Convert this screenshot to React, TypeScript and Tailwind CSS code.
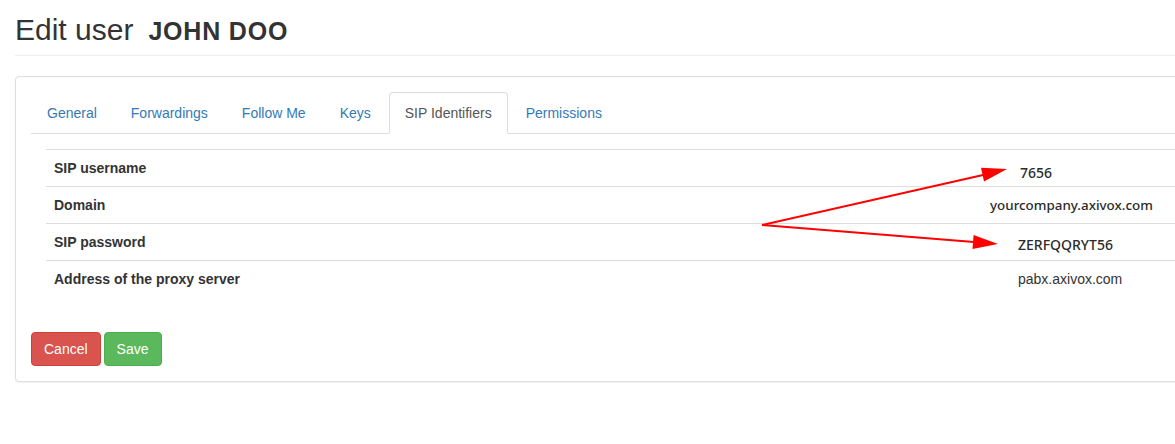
const tabs = ["General", "Forwardings", "Follow Me", "Keys", "SIP Identifiers", "Permissions"];

const App = () => {
    return (
        <div className="relative w-full h-[444px] overflow-hidden bg-white text-[14px] leading-5 text-[#333]" style={{ fontFamily: '"Liberation Sans", Arial, sans-serif' }}>
            <div className="w-[1220px] pl-[15px]">

                {/* HEADER */}
                <div className="pt-[13px] pb-[7px] border-b border-[#eee]">
                    <h1 className="text-[30px] leading-[33px] font-normal">
                        Edit user
                        <span className="ml-[15px] text-[25px] font-bold tracking-[0.8px]">JOHN DOO</span>
                    </h1>
                </div>

                {/* PANEL */}
                <div className="mt-5 border border-[#ddd] rounded shadow-[0_1px_1px_rgba(0,0,0,0.05)] p-[15px]">
                    <ul className="flex border-b border-[#ddd]">
                        {tabs.map((t) => (
                            <li key={t} className="mr-[2px] -mb-px">
                                <a
                                    className={`block px-[15px] py-[10px] rounded-t border ${
                                        t === "SIP Identifiers"
                                            ? "bg-white border-[#ddd] border-b-transparent text-[#555]"
                                            : "border-transparent text-[#337ab7]"
                                    }`}
                                >
                                    {t}
                                </a>
                            </li>
                        ))}
                    </ul>

                    <div className="p-[15px]">
                        <div className="mb-5">
                            <div className="grid grid-cols-[936px_1fr] border-t border-[#ddd]">
                                <div className="p-2 font-bold">SIP username</div>
                                <div className="p-2">
                                    <span className="inline-block ml-[30px] translate-y-[5px] font-medium text-[#2b2b2b]" style={{ fontFamily: '"Noto Sans", sans-serif' }}>7656</span>
                                </div>
                            </div>
                            <div className="grid grid-cols-[936px_1fr] border-t border-[#ddd]">
                                <div className="p-2 font-bold">Domain</div>
                                <div className="p-2">
                                    <span className="inline-block text-[13.4px] font-medium text-[#2b2b2b]" style={{ fontFamily: '"Noto Sans", sans-serif' }}>yourcompany.axivox.com</span>
                                </div>
                            </div>
                            <div className="grid grid-cols-[936px_1fr] border-t border-[#ddd]">
                                <div className="p-2 font-bold">SIP password</div>
                                <div className="p-2">
                                    <span className="inline-block ml-[28px] translate-y-[3px] font-medium text-[#2b2b2b]" style={{ fontFamily: '"Noto Sans", sans-serif' }}>ZERFQQRYT56</span>
                                </div>
                            </div>
                            <div className="grid grid-cols-[936px_1fr] border-t border-[#ddd]">
                                <div className="p-2 font-bold">Address of the proxy server</div>
                                <div className="p-2">
                                    <span className="ml-[28px]">pabx.axivox.com</span>
                                </div>
                            </div>
                        </div>
                    </div>

                    <div className="flex gap-[3px]">
                        <button className="px-3 py-[6px] rounded border border-[#d43f3a] bg-[#d9534f] text-white">Cancel</button>
                        <button className="px-3 py-[6px] rounded border border-[#4cae4c] bg-[#5cb85c] text-white">Save</button>
                    </div>
                </div>
            </div>

            {/* ANNOTATION ARROWS */}
            <svg className="absolute inset-0 pointer-events-none" width="1175" height="444">
                <line x1="762" y1="225" x2="983" y2="175" stroke="#ff0000" strokeWidth="2" />
                <polygon points="1007,169 984,181.5 981,167.8" fill="#ff0000" />
                <line x1="762" y1="225" x2="974" y2="242" stroke="#ff0000" strokeWidth="2" />
                <polygon points="998,244 972.5,249 973.6,235" fill="#ff0000" />
            </svg>
        </div>
    )
}

export default App;
